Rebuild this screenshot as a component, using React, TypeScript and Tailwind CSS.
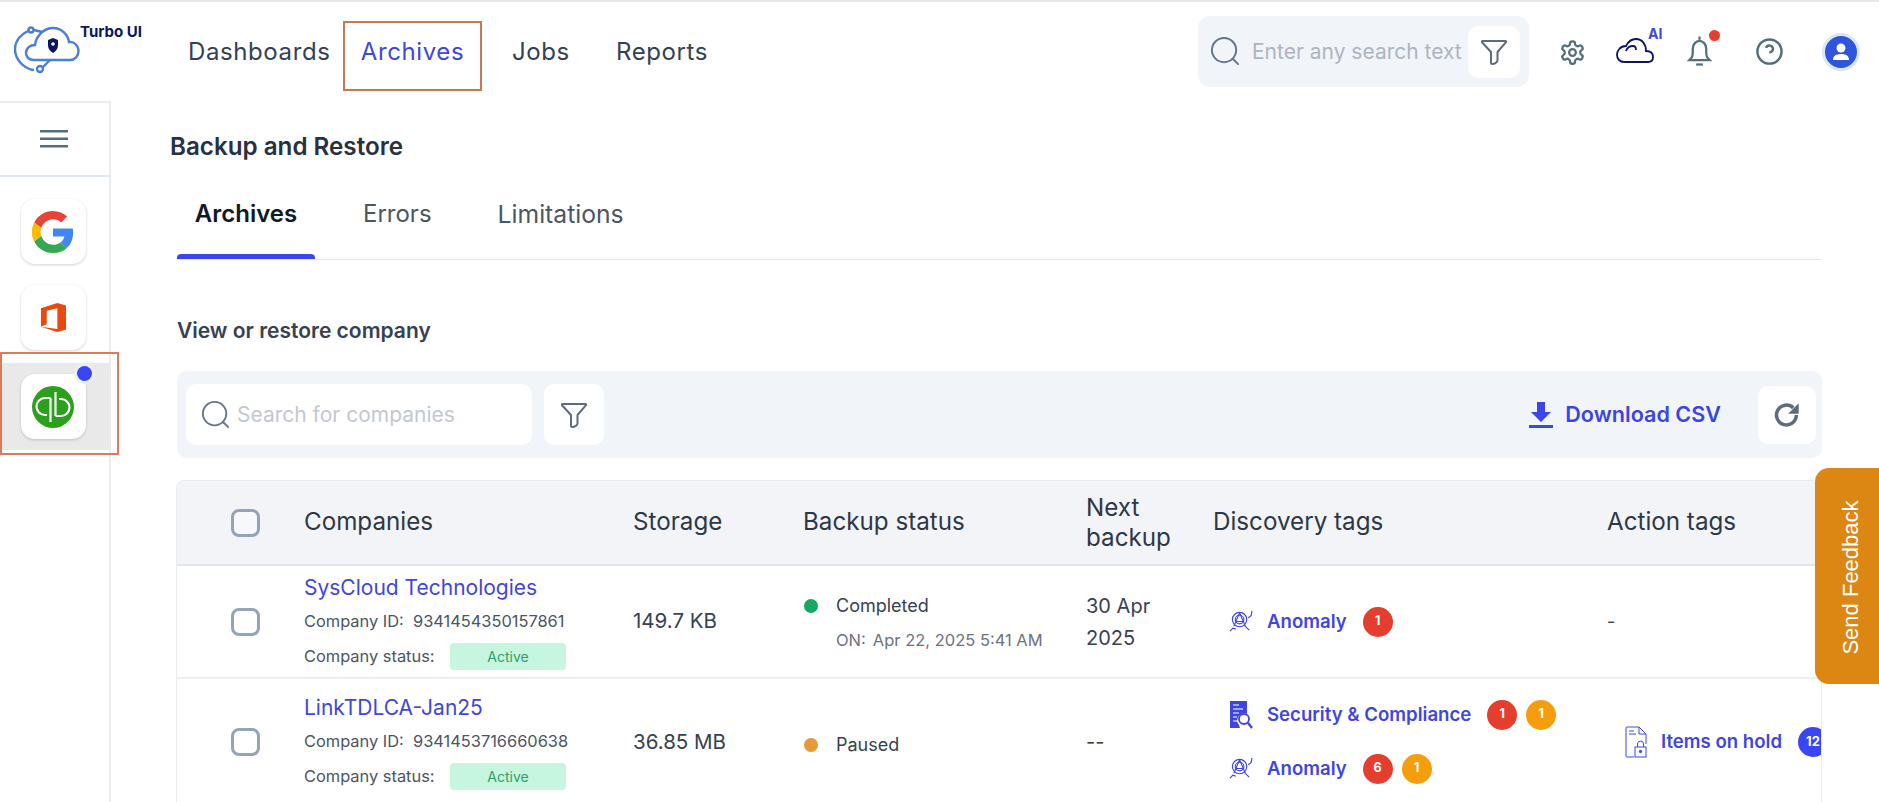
import React from "react";

const Search = ({ className = "" }: { className?: string }) => (
  <svg viewBox="0 0 32 32" fill="none" className={className}>
    <circle cx="14.5" cy="14.5" r="12.5" stroke="#64748b" strokeWidth="2" />
    <path d="M24 24l5 5" stroke="#64748b" strokeWidth="2" strokeLinecap="round" />
  </svg>
);
const Funnel = ({ className = "" }: { className?: string }) => (
  <svg viewBox="0 0 28 28" fill="none" className={className}>
    <path d="M2.5 3h23c.6 0 .9.7.5 1.2L17.5 14v8.5c0 1.800-3 3.500-5 3.500-1 0-1.500-.7-1.500-1.500V14L2 4.200C1.600 3.700 1.900 3 2.500 3z" stroke="#5f6b7a" strokeWidth="2" strokeLinejoin="round" />
  </svg>
);
const Checkbox = () => <div className="w-[29px] h-[28px] rounded-[8px] border-[3px] border-[#94a3b8] bg-white/40" />;

const Anomaly = () => (
  <svg viewBox="0 0 26 24" fill="none" stroke="#3f46e0" strokeWidth="1.200" className="w-[25px] h-[23px]">
    <circle cx="11" cy="10" r="7.500" />
    <circle cx="11" cy="10" r="4.500" />
    <path d="M11 3L5 17M11 3l6 14M7 12h8M16 16l5 5" />
    <path d="M1 22l3-3 3 1M20 8l3-2 1-5" />
  </svg>
);
const SecDoc = () => (
  <svg viewBox="0 0 24 30" className="w-[24px] h-[30px]">
    <path d="M1 1h17v13a7 7 0 0 0-8 11l1 3H1z" fill="#3f46e0" />
    <path d="M4 5h6M4 9h10M4 13h6M4 17h4M4 21h5" stroke="#fff" strokeWidth="1.200" />
    <circle cx="15" cy="19" r="5" fill="none" stroke="#3f46e0" strokeWidth="1.800" />
    <path d="M19 23l4 5" stroke="#3f46e0" strokeWidth="2.400" />
  </svg>
);
const HoldDoc = () => (
  <svg viewBox="0 0 22 32" fill="none" stroke="#3f46e0" strokeWidth="1" className="w-[22px] h-[32px]">
    <path d="M9 31H2a1 1 0 0 1-1-1V2a1 1 0 0 1 1-1h12l7 7v10" />
    <path d="M14 1v7h7M4 5h5M4 8h7" />
    <rect x="10" y="21" width="11" height="10" />
    <path d="M12.500 21v-3a3 3 0 0 1 6 0v3" />
    <circle cx="15.500" cy="25.500" r="1.200" fill="#3f46e0" />
  </svg>
);

const Badge = ({ c, n }: { c: string; n: string }) => (
  <span className={`shrink-0 w-[30px] h-[30px] rounded-full flex items-center justify-center text-white text-[12.500px] font-bold ${c}`}>{n}</span>
);

const Tag = ({ icon, label, children }: { icon: React.ReactNode; label: string; children: React.ReactNode }) => (
  <div className="flex items-center">
    <span className="w-[38px] flex justify-start shrink-0">{icon}</span>
    <span className="text-[#3f46e0] text-[18.600px] font-semibold whitespace-nowrap">{label}</span>
    <span className="flex gap-[9px] ml-[16px]">{children}</span>
  </div>
);

const Meta = ({ name, id }: { name: string; id: string }) => (
  <div className="flex flex-col pt-[2px]">
    <span className="text-[#3f46d9] text-[21px] leading-[24px]">{name}</span>
    <span className="mt-[9px] text-[#4b5563] text-[16.400px] leading-[24px] whitespace-pre">Company ID:  {id}</span>
    <div className="mt-[10px] flex items-center h-[27px]">
      <span className="text-[#4b5563] text-[16.400px] w-[146px]">Company status:</span>
      <span className="w-[116px] h-[27px] rounded-[4px] bg-[#c6f6e0] text-[#2f9e6b] text-[14px] flex items-center justify-center">Active</span>
    </div>
  </div>
);

const Card = ({ children }: { children: React.ReactNode }) => (
  <div className="w-[65px] h-[65px] rounded-[14px] bg-white shadow-[0_1px_3px_rgba(0,0,0,0.18)] flex items-center justify-center">{children}</div>
);

const cols = "grid grid-cols-[127px_329px_170px_283px_127px_394px_1fr]";

export default function App() {
  return (
    <div className="relative w-full h-[802px] overflow-hidden bg-white border-t-2 border-[#e8e8e8] font-['Inter',sans-serif] text-[#2d3748]">
      <header className="flex items-center h-[99px]">
        <div className="relative w-[188px] h-full shrink-0">
          <svg viewBox="0 0 66 48" fill="none" className="absolute left-[14px] top-[24px] w-[66px] h-[48px]" stroke="#4a7fd6" strokeWidth="2.400">
            <path d="M14 5C6 9 1 15 1 23C1 33 9 42 19 44" strokeLinecap="round" />
            <circle cx="17" cy="4" r="2.500" />
            <circle cx="26" cy="43" r="3" />
            <path d="M29 41L36 34M20 4L28 6" />
            <path d="M20 34C15 34 12 31 12 27C12 22 16 19 21 19C22 10 30 2 39 2C48 2 54 9 55 16C60 15 64.500 20 64.500 25C64.500 30 61 34 56 34Z" />
            <path d="M39 12l5 2v5c0 4-2 6-5 8-3-2-5-4-5-8v-5z" fill="#0b1560" stroke="none" />
            <circle cx="39" cy="18" r="1.800" fill="#fff" stroke="none" />
          </svg>
          <span className="absolute left-[80px] top-[19px] text-[15px] font-bold text-[#0b1560] whitespace-nowrap">Turbo UI</span>
        </div>
        <nav className="flex items-center text-[24px] tracking-[0.6px] text-[#344054] h-full">
          <span className="w-[155px]">Dashboards</span>
          <span className="w-[139px] h-[70px] mt-[9px] pb-[9px] border-2 border-[#c9775a] text-[#3f46d9] flex items-center justify-center">Archives</span>
          <span className="ml-[30px] w-[104px]">Jobs</span>
          <span>Reports</span>
        </nav>
        <div className="ml-auto flex items-center h-full">
          <div className="w-[331px] h-[71px] rounded-[12px] bg-[#f1f4f9] flex items-center pl-[12px] pr-[9px]">
            <Search className="w-[31px] h-[31px] shrink-0" />
            <span className="ml-[11px] text-[21px] text-[#aeb4bf] whitespace-nowrap">Enter any search text</span>
            <span className="ml-auto w-[52px] h-[52px] rounded-[10px] bg-white flex items-center justify-center shrink-0">
              <Funnel className="w-[28px] h-[28px]" />
            </span>
          </div>
          <div className="relative w-[350px] h-full">
            <svg viewBox="0 0 24 24" fill="none" stroke="#546e7a" strokeWidth="2" className="absolute left-[30px] top-[37px] w-[27px] h-[27px]">
              <path d="M12.220 2h-.440a2 2 0 0 0-2 2v.180a2 2 0 0 1-1 1.730l-.430.250a2 2 0 0 1-2 0l-.150-.080a2 2 0 0 0-2.730.730l-.220.380a2 2 0 0 0 .730 2.730l.150.100a2 2 0 0 1 1 1.720v.510a2 2 0 0 1-1 1.740l-.150.090a2 2 0 0 0-.730 2.730l.220.380a2 2 0 0 0 2.730.730l.150-.080a2 2 0 0 1 2 0l.430.250a2 2 0 0 1 1 1.730V20a2 2 0 0 0 2 2h.440a2 2 0 0 0 2-2v-.180a2 2 0 0 1 1-1.730l.430-.250a2 2 0 0 1 2 0l.150.080a2 2 0 0 0 2.730-.730l.220-.390a2 2 0 0 0-.730-2.730l-.150-.080a2 2 0 0 1-1-1.740v-.500a2 2 0 0 1 1-1.740l.150-.090a2 2 0 0 0 .730-2.730l-.220-.380a2 2 0 0 0-2.730-.730l-.150.080a2 2 0 0 1-2 0l-.430-.250a2 2 0 0 1-1-1.730V4a2 2 0 0 0-2-2z" />
              <circle cx="12" cy="12" r="3" />
            </svg>
            <svg viewBox="0 0 38 26" fill="none" stroke="#0b1560" strokeWidth="1.800" className="absolute left-[87px] top-[35px] w-[38px] h-[26px]">
              <path d="M8 25h24c3 0 5-2 5-5 0-4-3-6-7-6 0-7-4-12-10-12-5 0-8 3-10 7-6 0-9 5-9 9 0 4 3 7 7 7z" />
              <path d="M10 14c1-3 4-5 7-5 2 0 3 1 3 4" />
            </svg>
            <span className="absolute left-[119px] top-[21px] text-[14px] font-bold text-[#3f46e0]">AI</span>
            <svg viewBox="0 0 24 28" fill="none" stroke="#546e7a" strokeWidth="2" className="absolute left-[157px] top-[32px] w-[27px] h-[34px]">
              <path d="M12 1v3M3 22c2-2 3-3 3-7v-3c0-4 3-7 6-7s6 3 6 7v3c0 4 1 5 3 7z" />
              <path d="M9 26h6" />
            </svg>
            <span className="absolute left-[180px] top-[28px] w-[11px] h-[11px] rounded-full bg-[#e53e2e]" />
            <svg viewBox="0 0 24 24" fill="none" stroke="#546e7a" strokeWidth="2" className="absolute left-[226px] top-[35px] w-[29px] h-[29px]">
              <circle cx="12" cy="12" r="10" />
              <path d="M9.100 9a3 3 0 0 1 5.800 1c0 2-3 3-3 3M12 17h.01" />
            </svg>
            <span className="absolute left-[293px] top-[31px] w-[38px] h-[38px] rounded-full bg-[#2f55dc] border-[3px] border-[#dbe6f8] flex items-center justify-center">
              <svg viewBox="0 0 24 24" fill="#fff" className="w-[24px] h-[24px]">
                <circle cx="12" cy="8" r="4.500" />
                <path d="M4 20c0-4 3-6 8-6s8 2 8 6z" />
              </svg>
            </span>
          </div>
        </div>
      </header>

      <div className="flex h-[701px]">
        <aside className="relative w-[111px] shrink-0 border-r-2 border-t-2 border-[#e9edf2]">
          <div className="h-[74px] border-b-2 border-[#e2e8f0] flex items-center justify-center pr-[2px]">
            <svg viewBox="0 0 28 18" className="w-[28px] h-[18px]" fill="#546e7a">
              <rect width="28" height="2.500" y="0" />
              <rect width="28" height="2.500" y="7.500" />
              <rect width="28" height="2.500" y="15" />
            </svg>
          </div>
          <div className="flex flex-col items-center pt-[22px] pr-[3px]">
            <div className="h-[86px]">
              <Card>
                <svg viewBox="0 0 48 48" className="w-[42px] h-[42px]">
                  <path fill="#ea4335" d="M24 9.500c3.500 0 6.700 1.200 9.200 3.600l6.900-6.900C35.900 2.400 30.500 0 24 0 14.600 0 6.500 5.400 2.600 13.200l8 6.200C12.500 13.600 17.800 9.500 24 9.500z" />
                  <path fill="#4285f4" d="M47 24.500c0-1.600-.1-3.100-.4-4.500H24v9h13c-.6 3-2.300 5.500-4.800 7.200l7.700 6C44.400 38 47 31.800 47 24.500z" />
                  <path fill="#fbbc05" d="M10.500 28.600A14.500 14.500 0 0 1 10.500 19.400l-8-6.200a24 24 0 0 0 0 21.600z" />
                  <path fill="#34a853" d="M24 48c6.500 0 11.900-2.100 15.900-5.800l-7.700-6c-2.200 1.500-4.900 2.300-8.200 2.300-6.200 0-11.500-4.100-13.400-9.900l-8 6.200C6.500 42.600 14.600 48 24 48z" />
                </svg>
              </Card>
            </div>
            <Card>
              <svg viewBox="0 0 28 32" className="w-[27px] h-[31px]">
                <path fill="#e64a0f" d="M1 6.500L18 1l9 2.500v25L18 31 1 25.500 18 28V6.500L7 9v14l-6 2.500z" />
              </svg>
            </Card>
          </div>
          <div className="relative mt-[13px] h-[87px] bg-[#e9e9e9] flex items-center justify-center ml-[2px] pr-[5px]">
            <Card>
              <svg viewBox="0 0 44 44" className="w-[44px] h-[44px]">
                <circle cx="22" cy="22" r="21" fill="#2ca01c" />
                <path d="M19.500 13H14a8.500 8.500 0 0 0 0 17h2M19.500 13V37M24.500 31H30a8.500 8.500 0 0 0 0-17h-2M24.500 7V31" fill="none" stroke="#fff" strokeWidth="2.200" />
              </svg>
            </Card>
            <span className="absolute left-[75px] top-[3px] w-[15px] h-[15px] rounded-full bg-[#3b45f5] shadow-[0_0_0_3px_rgba(235,238,250,0.9)]" />
          </div>
          <div className="absolute left-0 top-[249px] w-[119px] h-[103px] border-2 border-[#d97c5c] pointer-events-none" />
        </aside>

        <main className="flex-1 min-w-0 pl-[59px] pr-[57px]">
          <h1 className="h-[60px] pt-[32px] text-[24.200px] leading-[28px] font-semibold text-[#27313f] whitespace-nowrap">Backup and Restore</h1>
          <div className="mt-[22px] ml-[7px] flex h-[77px] border-b border-[#e2e8f0] text-[24px]">
            <div className="relative w-[138px] text-center font-semibold text-[#111827] pt-[13px]">
              Archives
              <span className="absolute left-0 right-0 bottom-0 h-[5px] rounded-t-[4px] bg-[#3b45e8]" />
            </div>
            <div className="ml-[48px] pt-[13px] text-[#4b5563]">Errors</div>
            <div className="ml-[66px] pt-[13px] text-[#4b5563] text-[24.700px]">Limitations</div>
          </div>
          <h2 className="ml-[7px] mt-[58px] text-[21px] leading-[26px] font-semibold text-[#374151]">View or restore company</h2>

          <div className="ml-[7px] mt-[27px] h-[87px] rounded-[10px] bg-[#f1f4f9] flex items-center pl-[9px] pr-[6px]">
            <div className="w-[346px] h-[61px] rounded-[10px] bg-white flex items-center pl-[15px]">
              <Search className="w-[30px] h-[30px]" />
              <span className="ml-[6px] text-[21px] text-[#c3c8d0]">Search for companies</span>
            </div>
            <div className="ml-[12px] w-[60px] h-[61px] rounded-[10px] bg-white flex items-center justify-center">
              <Funnel className="w-[28px] h-[28px]" />
            </div>
            <svg viewBox="0 0 24 26" className="ml-auto w-[24px] h-[26px]" fill="#3b45e8">
              <path d="M8 0h8v10h6L12 20 2 10h6zM0 23h24v3H0z" />
            </svg>
            <span className="ml-[12px] text-[21.600px] font-semibold text-[#3b45e0]">Download CSV</span>
            <div className="ml-[37px] w-[58px] h-[58px] rounded-[10px] bg-white flex items-center justify-center">
              <svg viewBox="0 0 24 24" fill="none" className="w-[28px] h-[28px]">
                <path d="M20 12a8.500 8.500 0 1 1-2.600-6.100" stroke="#5f6b7a" strokeWidth="3" />
                <path d="M22 2v9h-9z" fill="#5f6b7a" />
              </svg>
            </div>
          </div>

          <div className="ml-[6px] mt-[22px] h-[400px] border-x border-t border-[#e8ebf0] rounded-t-[8px] overflow-hidden">
            <div className={`${cols} h-[85px] bg-[#f2f4f8] border-b-2 border-[#e2e5ea] items-center text-[24.200px] text-[#2d3748] rounded-t-[8px]`}>
              <div className="pl-[54px]"><Checkbox /></div>
              <div>Companies</div>
              <div>Storage</div>
              <div>Backup status</div>
              <div className="leading-[30px]">Next<br />backup</div>
              <div className="whitespace-nowrap">Discovery tags</div>
              <div className="whitespace-nowrap">Action tags</div>
            </div>
            <div className={`${cols} h-[113px] border-b-2 border-[#eceff3] items-center`}>
              <div className="pl-[54px]"><Checkbox /></div>
              <Meta name="SysCloud Technologies" id="9341454350157861" />
              <div className="text-[20.500px] text-[#374151]">149.7 KB</div>
              <div className="col-span-1 flex flex-col whitespace-nowrap pt-[3px]">
                <div className="flex items-center">
                  <span className="w-[14px] h-[14px] rounded-full bg-[#16a862] ml-[1px]" />
                  <span className="ml-[18px] text-[18px] leading-[24px] text-[#374151]">Completed</span>
                </div>
                <span className="ml-[33px] mt-[10px] text-[16.500px] text-[#6b7280]">ON:<span className="ml-[7px]">Apr 22, 2025 5:41 AM</span></span>
              </div>
              <div className="text-[20px] leading-[32px] text-[#374151]">30 Apr<br />2025</div>
              <div className="pl-[16px]">
                <Tag icon={<Anomaly />} label="Anomaly"><Badge c="bg-[#e53e2e]" n="1" /></Tag>
              </div>
              <div className="text-[18px] text-[#374151]">-</div>
            </div>
            <div className={`${cols} h-[125px] items-center`}>
              <div className="pl-[54px]"><Checkbox /></div>
              <Meta name="LinkTDLCA-Jan25" id="9341453716660638" />
              <div className="text-[20.500px] text-[#374151] pt-[1px]">36.85 MB</div>
              <div className="flex items-center pt-[6px]">
                <span className="w-[14px] h-[14px] rounded-full bg-[#e69a35] ml-[1px]" />
                <span className="ml-[18px] text-[18px] text-[#374151]">Paused</span>
              </div>
              <div className="text-[20px] text-[#374151]">--</div>
              <div className="pl-[16px] flex flex-col gap-[24px]">
                <Tag icon={<SecDoc />} label="Security & Compliance"><Badge c="bg-[#e53e2e]" n="1" /><Badge c="bg-[#f59e0b]" n="1" /></Tag>
                <Tag icon={<Anomaly />} label="Anomaly"><Badge c="bg-[#e53e2e]" n="6" /><Badge c="bg-[#f59e0b]" n="1" /></Tag>
              </div>
              <div className="ml-[18px] flex items-center whitespace-nowrap">
                <span className="w-[36px] shrink-0"><HoldDoc /></span>
                <span className="text-[#3f46e0] text-[18.600px] font-semibold">Items on hold</span>
                <span className="ml-[16px] shrink-0 w-[30px] h-[30px] rounded-full bg-[#3b45f5] text-white text-[13px] font-bold flex items-center justify-center">12</span>
              </div>
            </div>
          </div>
        </main>
      </div>

      <div className="absolute right-0 top-[466px] w-[64px] h-[216px] rounded-l-[14px] bg-[#dc8714] flex items-center justify-center pl-[6px] pt-[2px]">
        <span className="-rotate-90 whitespace-nowrap text-white text-[22px] font-['Liberation_Sans',sans-serif]">Send Feedback</span>
      </div>
    </div>
  );
}
